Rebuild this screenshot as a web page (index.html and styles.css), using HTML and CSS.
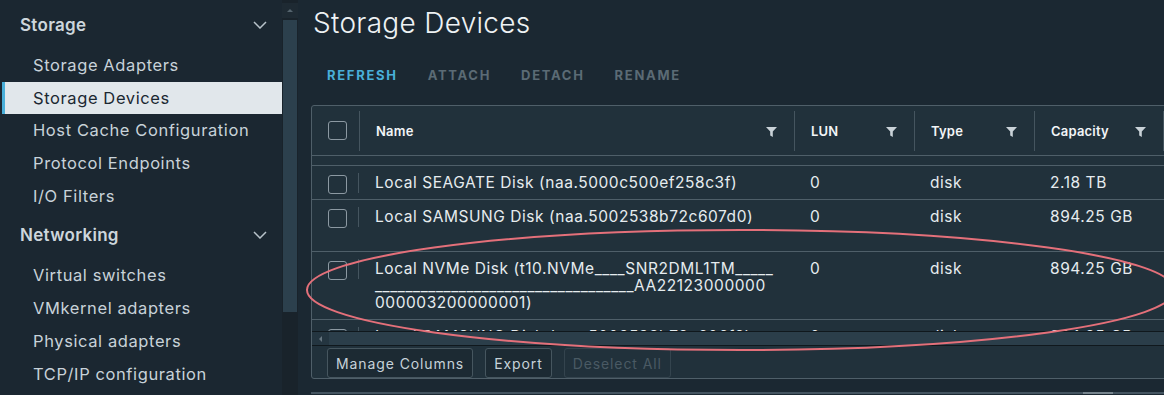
FILE: index.html
```html
<!DOCTYPE html>
<html lang="en">
<head>
    <meta charset="UTF-8">
    <meta name="viewport" content="width=device-width, initial-scale=1.0">
    <title>Storage Devices</title>
    <link rel="stylesheet" href="styles.css">
</head>
<body>

<div class="app">
    <nav class="sidebar">
        <div class="nav-group">
            <div class="nav-head">
                <span>Storage</span>
                <svg class="chevron" width="14" height="8" viewBox="0 0 14 8"><polyline points="1,1 7,7 13,1"/></svg>
            </div>
            <ul class="nav-list">
                <li>Storage Adapters</li>
                <li class="active">Storage Devices</li>
                <li>Host Cache Configuration</li>
                <li>Protocol Endpoints</li>
                <li>I/O Filters</li>
            </ul>
        </div>
        <div class="nav-group">
            <div class="nav-head">
                <span>Networking</span>
                <svg class="chevron" width="14" height="8" viewBox="0 0 14 8"><polyline points="1,1 7,7 13,1"/></svg>
            </div>
            <ul class="nav-list">
                <li>Virtual switches</li>
                <li>VMkernel adapters</li>
                <li>Physical adapters</li>
                <li>TCP/IP configuration</li>
            </ul>
        </div>
    </nav>

    <div class="vscroll">
        <div class="vscroll-btn"><span class="tri-up"></span></div>
        <div class="vscroll-thumb"></div>
    </div>

    <main class="content">
        <h1>Storage Devices</h1>
        <div class="actions">
            <button class="action enabled">REFRESH</button>
            <button class="action">ATTACH</button>
            <button class="action">DETACH</button>
            <button class="action">RENAME</button>
        </div>

        <div class="grid">
            <div class="grid-head">
                <div class="cell check"><span class="box"></span></div>
                <div class="cell col">Name <svg class="filter" width="11" height="10" viewBox="0 0 11 10"><path d="M0 0H11L6.8 4.6V10L4.2 8.6V4.6Z"/></svg></div>
                <div class="cell col">LUN <svg class="filter" width="11" height="10" viewBox="0 0 11 10"><path d="M0 0H11L6.8 4.6V10L4.2 8.6V4.6Z"/></svg></div>
                <div class="cell col">Type <svg class="filter" width="11" height="10" viewBox="0 0 11 10"><path d="M0 0H11L6.8 4.6V10L4.2 8.6V4.6Z"/></svg></div>
                <div class="cell col">Capacity <svg class="filter" width="11" height="10" viewBox="0 0 11 10"><path d="M0 0H11L6.8 4.6V10L4.2 8.6V4.6Z"/></svg></div>
                <div class="cell col"></div>
            </div>

            <div class="grid-body">
                <div class="row-tail"></div>
                <div class="row">
                    <div class="cell check"><span class="box"></span></div>
                    <div class="cell">Local SEAGATE Disk (naa.5000c500ef258c3f)</div>
                    <div class="cell">0</div>
                    <div class="cell">disk</div>
                    <div class="cell">2.18 TB</div>
                    <div class="cell"></div>
                </div>
                <div class="row tall">
                    <div class="cell check"><span class="box"></span></div>
                    <div class="cell">Local SAMSUNG Disk (naa.5002538b72c607d0)</div>
                    <div class="cell">0</div>
                    <div class="cell">disk</div>
                    <div class="cell">894.25 GB</div>
                    <div class="cell"></div>
                </div>
                <div class="row">
                    <div class="cell check"><span class="box"></span></div>
                    <div class="cell">Local NVMe Disk (t10.NVMe____SNR2DML1TM_____<br>__________________________________AA22123000000<br>000003200000001)</div>
                    <div class="cell">0</div>
                    <div class="cell">disk</div>
                    <div class="cell">894.25 GB</div>
                    <div class="cell"></div>
                </div>
                <div class="row">
                    <div class="cell check"><span class="box"></span></div>
                    <div class="cell">Local SAMSUNG Disk (naa.5002538b72c606f2)</div>
                    <div class="cell">0</div>
                    <div class="cell">disk</div>
                    <div class="cell">894.25 GB</div>
                    <div class="cell"></div>
                </div>
            </div>

            <div class="hscroll">
                <div class="hscroll-btn"><span class="tri-left"></span></div>
                <div class="hscroll-thumb"></div>
            </div>

            <div class="grid-foot">
                <button class="foot-btn">Manage Columns</button>
                <button class="foot-btn">Export</button>
                <button class="foot-btn" disabled>Deselect All</button>
            </div>
        </div>

        <div class="bottom-line"><span class="bottom-thumb"></span></div>
    </main>

    <!-- annotation drawn over the screenshot -->
    <svg class="annotation" width="1164" height="395" viewBox="0 0 1164 395">
        <ellipse cx="741" cy="290" rx="434" ry="60"/>
    </svg>
</div>

</body>
</html>
```

FILE: styles.css
```css
body {
    margin: 0;
    background-color: #1b2832;
    font-family: Inter, "Liberation Sans", sans-serif;
    color: #e3e9ed;
    overflow: hidden;
}
.app {
    position: relative;
    display: flex;
    width: 1164px;
    height: 395px;
    overflow: hidden;
}

/* sidebar */
.sidebar {
    width: 282px;
    flex: none;
    background-color: #1b2731;
    padding-top: 8px;
}
.nav-group + .nav-group {
    margin-top: 6px;
}
.nav-head {
    display: flex;
    align-items: center;
    justify-content: space-between;
    height: 34px;
    padding: 0 15px 0 20px;
    font-size: 17px;
    font-weight: 600;
    letter-spacing: 0.3px;
    color: #cdd6dc;
}
.chevron {
    fill: none;
    stroke: #b8c3ca;
    stroke-width: 1.5;
}
.nav-list {
    list-style: none;
    margin: 7px 0 0;
    padding: 0;
}
.nav-list li {
    height: 32.7px;
    line-height: 32.7px;
    padding-left: 28px;
    margin-left: 2px;
    font-size: 16.5px;
    letter-spacing: 0.6px;
    color: #c8d2d9;
    border-left: 3px solid transparent;
}
.nav-list li.active {
    background-color: #e1e7eb;
    border-left-color: #49afd9;
    color: #1b2832;
}

.vscroll {
    width: 16px;
    flex: none;
    background-color: #19232b;
    padding-top: 3px;
}
.vscroll-btn {
    height: 15px;
    background-color: #1e2a33;
    display: flex;
    justify-content: center;
    padding-top: 6px;
    box-sizing: border-box;
}
.tri-up {
    width: 0;
    height: 0;
    border-left: 3px solid transparent;
    border-right: 3px solid transparent;
    border-bottom: 3px solid #55646e;
}
.vscroll-thumb {
    margin: 2px 1px 0;
    height: 292px;
    background-color: #2c404d;
}

/* main */
.content {
    flex: 1;
    min-width: 0;
    padding-left: 13px;
}
h1 {
    margin: 0 0 0 2px;
    padding-top: 6px;
    height: 39px;
    font-size: 28px;
    font-weight: 300;
    color: #eef2f4;
    letter-spacing: 0.3px;
}
.actions {
    display: flex;
    height: 60px;
    align-items: center;
}
.action {
    background: none;
    border: none;
    padding: 0 14px 0 16px;
    font-family: inherit;
    font-size: 13px;
    font-weight: 700;
    letter-spacing: 1.7px;
    color: #5b6b75;
}
.action.enabled {
    color: #49afd9;
}

/* datagrid */
.grid {
    width: 900px;
    border: 1px solid #4f5f69;
    border-radius: 3px;
    background-color: #21313b;
}
.grid-head,
.row {
    display: grid;
    grid-template-columns: 47px 435px 120px 120px 129px 1fr;
    border-bottom: 1px solid #4f5f69;
}
.grid-head {
    height: 49px;
    align-items: center;
}
.grid-head .cell {
    position: relative;
    height: 40px;
    display: flex;
    align-items: center;
    justify-content: space-between;
    padding: 0 17px 0 16px;
    font-size: 13px;
    font-weight: 600;
    letter-spacing: 0.2px;
    color: #f2f5f7;
    border-left: 1px solid #45555f;
}
.grid-head .cell.check {
    border-left: none;
    padding: 0 0 0 16px;
}
.filter {
    fill: #c9d2d8;
    margin-top: 3px;
}
.box {
    display: block;
    width: 17px;
    height: 17px;
    border: 1px solid #8c99a2;
    border-radius: 3px;
}

.grid-body {
    height: 175px;
    overflow: hidden;
}
.row-tail {
    height: 9px;
    border-bottom: 1px solid #4f5f69;
}
.row .cell {
    padding: 8px 16px 8px;
    font-size: 15.5px;
    line-height: 17px;
    letter-spacing: 0.55px;
    color: #e6ecef;
}
.row .cell.check {
    position: relative;
    padding: 9px 0 0 16px;
}
.row .cell.check::after {
    content: "";
    position: absolute;
    right: 0;
    top: 7px;
    height: 20px;
    border-left: 1px solid #45555f;
}
.row.tall {
    min-height: 51px;
}

.hscroll {
    display: flex;
    height: 13px;
    border-top: 1px solid #10181d;
    border-bottom: 1px solid #10181d;
    background-color: #2b3e4a;
}
.hscroll-btn {
    width: 17px;
    background-color: #243540;
    display: flex;
    align-items: center;
    justify-content: center;
}
.tri-left {
    width: 0;
    height: 0;
    border-top: 3px solid transparent;
    border-bottom: 3px solid transparent;
    border-right: 3px solid #66757f;
}
.hscroll-thumb {
    flex: 1;
}

.grid-foot {
    display: flex;
    gap: 12px;
    height: 32px;
    align-items: flex-end;
    padding-left: 15px;
}
.foot-btn {
    height: 30px;
    padding: 0 8px;
    font-family: inherit;
    font-size: 14px;
    letter-spacing: 0.9px;
    color: #c6d2d9;
    background-color: #1c2a33;
    border: 1px solid #46565f;
    border-radius: 3px;
}
.foot-btn:disabled {
    color: #4a5a64;
    border-color: #34444e;
    background-color: #21313b;
}

.bottom-line {
    position: relative;
    margin-top: 13px;
    height: 2px;
    background-color: #445460;
}
.bottom-thumb {
    position: absolute;
    left: 772px;
    width: 30px;
    height: 2px;
    background-color: #76848d;
}

.annotation {
    position: absolute;
    left: 0;
    top: 0;
    pointer-events: none;
}
.annotation ellipse {
    fill: none;
    stroke: #e4707a;
    stroke-width: 2;
}
```
